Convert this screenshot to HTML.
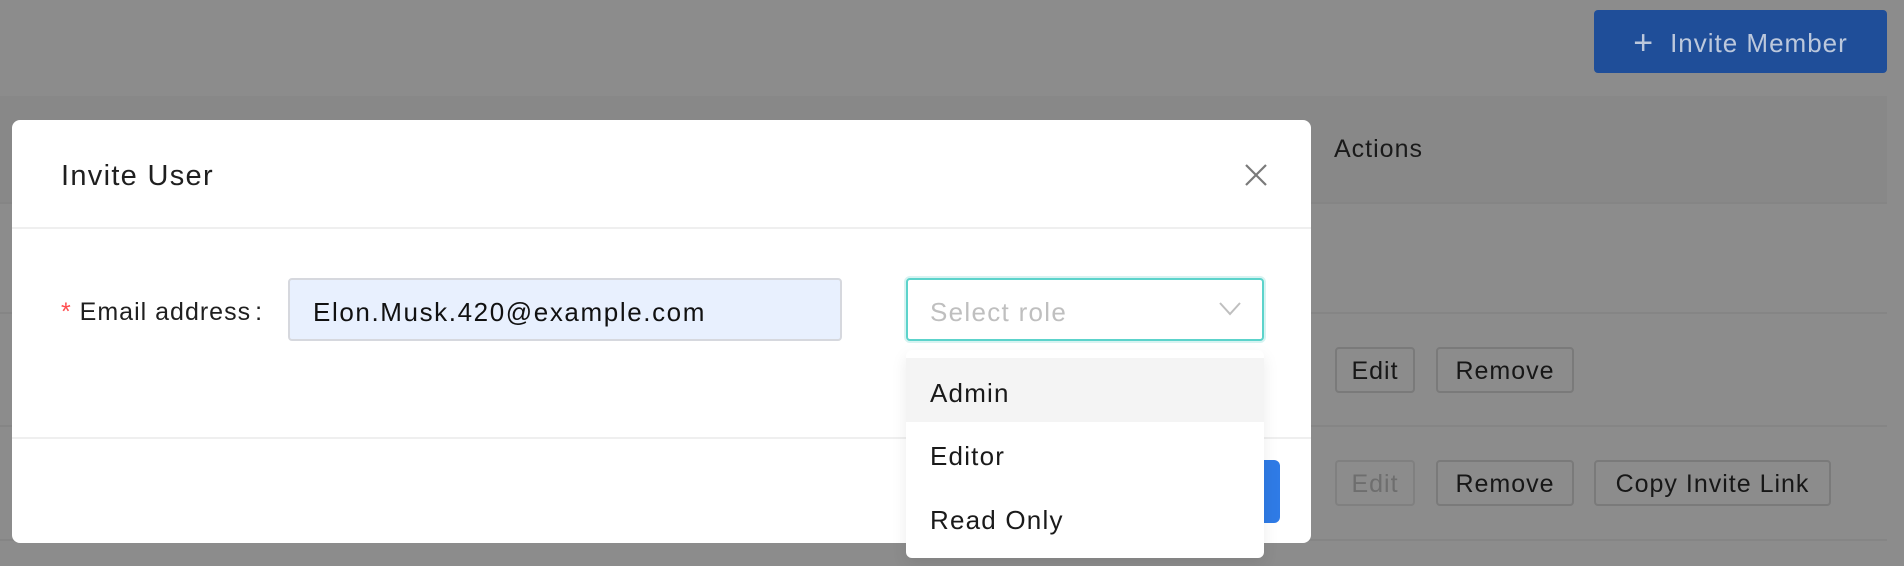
<!DOCTYPE html>
<html><head><meta charset="utf-8"><style>
*{box-sizing:border-box;margin:0;padding:0}
body{width:1904px;height:566px;overflow:hidden;background:#8c8c8c;font-family:"Liberation Sans",sans-serif;position:relative;color:#1f1f1f;letter-spacing:1px}
.a{position:absolute}
.btn{position:absolute;border:2px solid #7a7a7a;border-radius:4px;font-size:25px;color:#171717;display:flex;align-items:center;justify-content:center;height:46px;padding-top:3px}
.line{position:absolute;left:0;width:1887px;height:2px;background:#858585}
</style></head><body>
<div class="a" style="left:1594px;top:10px;width:293px;height:63px;background:#1f4e99;border-radius:4px;color:#bcc8dc;font-size:26px;display:flex;align-items:center;justify-content:center;gap:16px;padding-top:3px"><span style="font-size:34px;font-weight:300">+</span>Invite Member</div>
<div class="a" style="left:0;top:96px;width:1887px;height:107px;background:#888"></div>
<div class="a" style="left:1334px;top:135px;font-size:25px;color:#1a1a1a">Actions</div>
<div class="line" style="top:202px"></div>
<div class="line" style="top:312px"></div>
<div class="line" style="top:425px"></div>
<div class="line" style="top:539px"></div>
<div class="btn" style="left:1335px;top:347px;width:80px">Edit</div>
<div class="btn" style="left:1436px;top:347px;width:138px">Remove</div>
<div class="btn" style="left:1335px;top:460px;width:80px;color:#6e6e6e;border-color:#808080">Edit</div>
<div class="btn" style="left:1436px;top:460px;width:138px">Remove</div>
<div class="btn" style="left:1594px;top:460px;width:237px">Copy Invite Link</div>

<div class="a" style="left:12px;top:120px;width:1299px;height:423px;background:#fff;border-radius:8px"></div>
<div class="a" style="left:61px;top:160px;font-size:29px;color:#1f1f1f;letter-spacing:1.3px">Invite User</div>
<svg class="a" style="left:1245px;top:164px" width="22" height="22" viewBox="0 0 22 22"><path d="M1 1L21 21M21 1L1 21" stroke="#7a7a7a" stroke-width="2.2"/></svg>
<div class="a" style="left:12px;top:227px;width:1299px;height:2px;background:#efefef"></div>
<div class="a" style="left:61px;top:298px;font-size:25px"><span style="color:#ff4d4f">*</span> Email address<span style="margin-left:4px">:</span></div>
<div class="a" style="left:288px;top:278px;width:554px;height:63px;background:#e8f0fe;border:2px solid #d6d8de;border-radius:4px;font-size:26px;padding-left:23px;padding-top:5px;display:flex;align-items:center;color:#111;letter-spacing:1.6px">Elon.Musk.420@example.com</div>
<div class="a" style="left:904px;top:276px;width:362px;height:67px;border:3px solid #d7f3f1;border-radius:6px"></div>
<div class="a" style="left:906px;top:278px;width:358px;height:63px;border:2px solid #5cd3cb;border-radius:4px;font-size:26px;padding-left:22px;padding-top:5px;display:flex;align-items:center;color:#bfbfbf;letter-spacing:1.3px">Select role</div>
<svg class="a" style="left:1219px;top:302px" width="22" height="14" viewBox="0 0 22 14"><path d="M1 1L11 12L21 1" fill="none" stroke="#bfbfbf" stroke-width="2"/></svg>
<div class="a" style="left:12px;top:437px;width:1299px;height:2px;background:#efefef"></div>
<div class="a" style="left:1240px;top:460px;width:40px;height:63px;background:#2f7be6;border-radius:6px"></div>

<div class="a" style="left:906px;top:350px;width:358px;height:208px;background:#fff;border-radius:6px;box-shadow:0 6px 16px rgba(0,0,0,.08);letter-spacing:1.2px">
<div style="position:absolute;left:0;top:8px;width:358px;height:64px;background:#f4f4f4"></div>
<div style="position:absolute;left:24px;top:28px;font-size:26px;color:#1a1a1a">Admin</div>
<div style="position:absolute;left:24px;top:91px;font-size:26px;color:#1a1a1a">Editor</div>
<div style="position:absolute;left:24px;top:155px;font-size:26px;color:#1a1a1a">Read Only</div>
</div>
</body></html>
